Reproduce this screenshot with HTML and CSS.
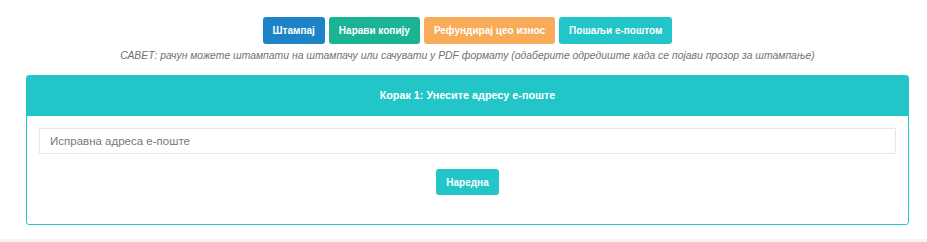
FILE: index.html
```html
<!DOCTYPE html>
<html lang="en">
<head>
<meta charset="utf-8">
<link rel="stylesheet" href="styles.css">
</head>
<body>
<div class="page">
  <div class="actions">
    <button class="btn btn-blue">Штампај</button>
    <button class="btn btn-green">Нарави копију</button>
    <button class="btn btn-orange">Рефундирај цео износ</button>
    <button class="btn btn-teal">Пошаљи е-поштом</button>
  </div>
  <p class="tip">САВЕТ: рачун можете штампати на штампачу или сачувати у PDF формату (одаберите одредиште када се појави прозор за штампање)</p>
  <div class="panel">
    <div class="panel-heading">Корак 1: Унесите адресу е-поште</div>
    <div class="panel-body">
      <input class="field" type="text" placeholder="Исправна адреса е-поште">
      <div class="next-row">
        <button class="btn btn-teal btn-next">Наредна</button>
      </div>
    </div>
  </div>
</div>
<div class="footer-band"></div>
</body>
</html>
```
FILE: styles.css
```css
* { box-sizing: border-box; }
html, body { margin: 0; padding: 0; background: #fff; }
body {
  font-family: "Liberation Sans", Arial, sans-serif;
  font-size: 13px;
  color: #676a6c;
  height: 242px;
  overflow: hidden;
}
.page {
  padding: 17px 18px 0 26px;
}
.actions {
  display: flex;
  justify-content: center;
  gap: 4px;
}
.btn {
  font-family: "Liberation Sans", Arial, sans-serif;
  font-weight: bold;
  font-size: 10px;
  color: #fff;
  border: none;
  border-radius: 3px;
  height: 27px;
  padding: 0 10px;
  cursor: pointer;
}
.btn-blue { background: #1c84c6; }
.btn-green { background: #1ab394; }
.btn-orange { background: #f8ac59; }
.btn-teal { background: #23c6c8; }
.tip {
  margin: 5px 0 0;
  text-align: center;
  font-style: italic;
  font-size: 10.4px;
  line-height: 14px;
  color: #707274;
}
.panel {
  margin-top: 12px;
  border: 1px solid #23c6c8;
  border-radius: 3px;
}
.panel-heading {
  background: #23c6c8;
  color: #fff;
  font-weight: bold;
  font-size: 10.8px;
  text-align: center;
  height: 40px;
  line-height: 38px;
  padding-bottom: 2px;
}
.panel-body {
  padding: 12px 12px 29px;
}
.field {
  display: block;
  width: 100%;
  height: 26px;
  border: 1px solid #e5e6e7;
  border-radius: 1px;
  padding: 0 10px;
  font-family: "Liberation Sans", Arial, sans-serif;
  font-size: 11.5px;
  color: #676a6c;
  outline: none;
}
.field::placeholder { color: #777; }
.next-row {
  display: flex;
  justify-content: center;
  margin-top: 15px;
}
.btn-next { height: 26px; padding: 0 10px; }
.footer-band {
  position: absolute;
  left: 0; right: 0; top: 239px;
  height: 3px;
  background: #f3f3f4;
}
```
